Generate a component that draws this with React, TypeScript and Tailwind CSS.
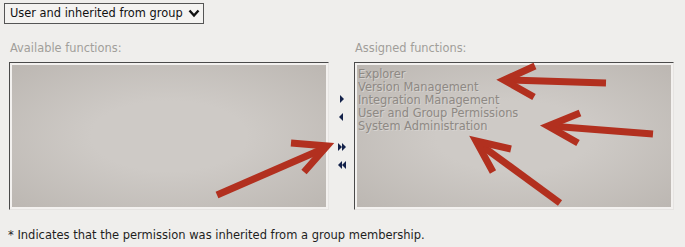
import React from 'react';

const font = { fontFamily: '"DejaVu Sans", Verdana, sans-serif' };

const items = [
  'Explorer',
  'Version Management',
  'Integration Management',
  'User and Group Permissions',
  'System Administration',
];

const ListBox: React.FC<{ children?: React.ReactNode }> = ({ children }) => (
  <div className="w-[320px] h-[148px] border-t border-l border-t-[#4a4a4a] border-l-[#4a4a4a] border-r border-b border-r-[#e6e4e2] border-b-[#e6e4e2] p-[2px] bg-[#f3f1ef]">
    <div className="w-full h-full bg-[radial-gradient(ellipse_at_center,#cecac6_35%,#bcb7b2_100%)] px-[1px] pt-[3px] text-[11.4px] leading-[13px] text-[#8e8984] [text-shadow:1px_1px_0_#d6d3d0]">
      {children}
    </div>
  </div>
);

const Tri: React.FC<{ dir: 'r' | 'l'; double?: boolean }> = ({ dir, double }) => (
  <svg width="12" height="8" viewBox="0 0 12 8" className="block">
    {dir === 'r' ? (
      double ? (
        <g fill="#14224a">
          <polygon points="2,0 6,4 2,8" />
          <polygon points="6,0 10,4 6,8" />
        </g>
      ) : (
        <polygon points="4,0 8,4 4,8" fill="#14224a" />
      )
    ) : double ? (
      <g fill="#14224a">
        <polygon points="6,0 2,4 6,8" />
        <polygon points="10,0 6,4 10,8" />
      </g>
    ) : (
      <polygon points="7,0 3,4 7,8" fill="#14224a" />
    )}
  </svg>
);

const App: React.FC = () => {
  return (
    <div className="relative w-[685px] h-[247px] bg-[#efeeec] overflow-hidden text-[#222]" style={font}>
      {/* Select */}
      <div className="pt-[3px] pl-[4px]">
        <div className="w-[200px] h-[21px] border border-[#555] bg-[#f4f3f1] flex items-center justify-between pl-[5px] pr-[3px] text-[11.4px] text-[#111]">
          <span>User and inherited from group</span>
          <svg width="12" height="9" viewBox="0 0 12 9">
            <polyline points="1.5,1.5 6,6.5 10.5,1.5" fill="none" stroke="#111" strokeWidth="2.4" />
          </svg>
        </div>
      </div>

      {/* Lists */}
      <div className="flex pl-[9px] pt-[17px]">
        <div className="flex flex-col">
          <div className="text-[11.4px] leading-[14px] text-[#a19e9a] pl-[1px] mb-[7px]">Available functions:</div>
          <ListBox />
        </div>
        <div className="w-[25px] pt-[54px] flex flex-col items-center">
          <div className="flex flex-col items-center gap-[10px] pl-[1px]">
            <Tri dir="r" />
            <Tri dir="l" />
          </div>
          <div className="flex flex-col items-center gap-[10px] mt-[22px]">
            <Tri dir="r" double />
            <Tri dir="l" double />
          </div>
        </div>
        <div className="flex flex-col">
          <div className="text-[11.4px] leading-[14px] text-[#a19e9a] pl-[1px] mb-[7px]">Assigned functions:</div>
          <ListBox>
            {items.map((t) => (
              <div key={t}>{t}</div>
            ))}
          </ListBox>
        </div>
      </div>

      {/* Footer */}
      <div className="pl-[8px] pt-[18px] text-[11.5px] leading-[14px] text-[#1e1e1e]">
        * Indicates that the permission was inherited from a group membership.
      </div>

      {/* Red annotation arrows */}
      <svg className="absolute inset-0 pointer-events-none" width="685" height="247" viewBox="0 0 685 247">
        <g stroke="#b2301f" strokeWidth="7" fill="none" strokeLinecap="butt" strokeLinejoin="miter">
          <line x1="217" y1="195" x2="325" y2="148" />
          <polyline points="291,143 327,146 304,172" />

          <line x1="606" y1="83" x2="506" y2="80" />
          <polyline points="535,66 504,80 534,97" />

          <line x1="653" y1="134" x2="550" y2="126" />
          <polyline points="580,113 548,126 578,143" />

          <line x1="560" y1="203" x2="478" y2="143" />
          <polyline points="511,149 476,141 493,172" />
        </g>
      </svg>
    </div>
  );
};

export default App;
